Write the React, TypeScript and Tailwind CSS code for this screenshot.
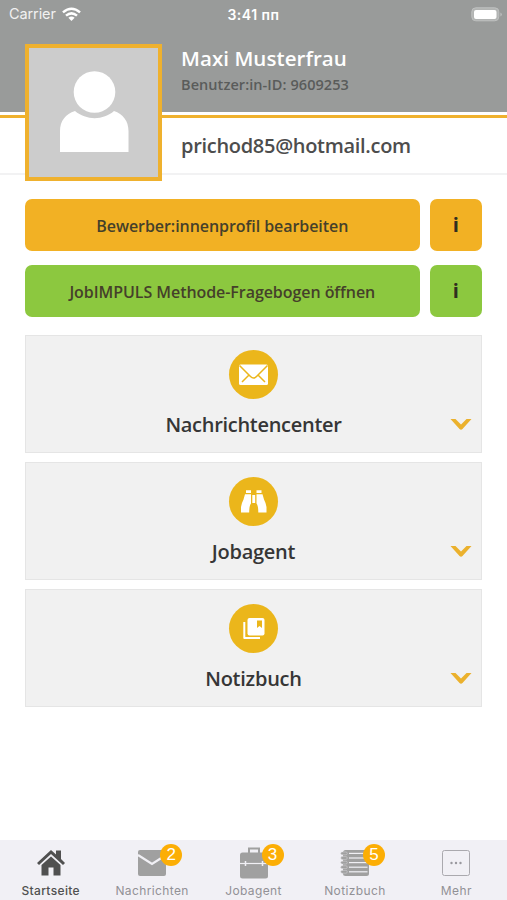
import React from "react";

function UserIcon() {
  return (
    <svg viewBox="0 0 128 128" className="h-32 w-32" fill="#fff">
      <circle cx="64.500" cy="44" r="20.800" />
      <path d="M30 104V83C30 73 35.500 66 45 63C56 72.500 73.500 72.500 84 63C93 66 98.500 73 98.500 83V104Z" />
    </svg>
  );
}

function EnvelopeIcon() {
  return (
    <svg viewBox="0 0 49 49" className="h-[49px] w-[49px]">
      <rect x="10" y="14.500" width="29" height="20.500" rx="1.500" fill="#fff" />
      <path d="M10.500 15.500L21.500 26.500Q24.500 29.500 27.500 26.500L38.500 15.500M13 32L19.500 25.500M36 32L29.500 25.500" fill="none" stroke="#ebb61b" strokeWidth="1.500" />
    </svg>
  );
}

function BinocularsIcon() {
  return (
    <svg viewBox="0 0 49 49" className="h-[49px] w-[49px]" fill="#fff">
      <path d="M17 13.200h5v2.800h-5zM27.500 13.200h5v2.800h-5z" />
      <path d="M16 17.200H22V26.500Q20.200 28.500 20.200 35.500H12V30Q12.600 26 14.500 22.500Z" />
      <path d="M33.500 17.200H27.500V26.500Q29.300 28.500 29.300 35.500H37.500V30Q36.900 26 35 22.500Z" />
      <path d="M23.300 18h2.900v8h-2.900z" />
    </svg>
  );
}

function BookIcon() {
  return (
    <svg viewBox="0 0 49 49" className="h-[49px] w-[49px]">
      <path d="M15.300 18V34H31" fill="none" stroke="#fff" strokeWidth="2" strokeLinejoin="round" />
      <rect x="18.500" y="14" width="17" height="17.500" rx="2" fill="#fff" />
      <path d="M28 16.500h5v7.500l-2.500-2-2.500 2z" fill="#ebb61b" />
    </svg>
  );
}

function Panel({ title, tracking, children }: { title: string; tracking: string; children: React.ReactNode }) {
  return (
    <section className="relative flex h-[118px] flex-col items-center border border-[#e5e5e5] bg-[#f1f1f1] pt-[14px]">
      <div className="h-[49px] w-[49px] rounded-full bg-[#ebb61b]">{children}</div>
      <h2 className={`mt-[12px] text-[20px] leading-[28px] font-semibold text-[#363636] ${tracking}`}>{title}</h2>
      <svg viewBox="0 0 22 14" className="absolute right-[9px] bottom-[21px] h-[14px] w-[22px]">
        <path d="M0.500 2H5.500L11 7.500L16.500 2H21.500L12.500 12Q11 13.500 9.500 12Z" fill="#ebb12d" />
      </svg>
    </section>
  );
}

function ActionRow({ label, color }: { label: string; color: string }) {
  return (
    <div className="flex h-[52.500px] gap-[10px]">
      <button className={`w-[395px] rounded-[7px] pt-[2px] text-[16px] font-semibold tracking-[-.06px] text-[#45402a] ${color}`}>{label}</button>
      <button className={`w-[52.500px] rounded-[7px] text-[20px] font-bold text-[#302e20] ${color}`}>i</button>
    </div>
  );
}

function HomeIcon() {
  return (
    <svg viewBox="0 0 30 30" className="h-[30px] w-[30px]" fill="#505050">
      <path d="M1 16L15 3L20 7.500V3.500H25V12L29 16L27 18L15 7L3 18Z" />
      <path d="M5.500 18L15 9.500L24.500 18V28.500H17.500V20.500H12.500V28.500H5.500Z" />
    </svg>
  );
}

function MailIcon() {
  return (
    <svg viewBox="0 0 30 30" className="h-[30px] w-[30px]">
      <rect x="1" y="3" width="28" height="26" rx="2" fill="#a0a0a0" />
      <path d="M1 8L15 17L29 8" fill="none" stroke="#f1f0f5" strokeWidth="2.200" />
    </svg>
  );
}

function BriefcaseIcon() {
  return (
    <svg viewBox="0 0 30 34" className="h-[34px] w-[30px]">
      <path d="M10 6V1.500H20V6" fill="none" stroke="#a0a0a0" strokeWidth="2" />
      <rect x="1" y="5.500" width="28" height="26" rx="2.500" fill="#a0a0a0" />
      <path d="M1 16.500H29" stroke="#f1f0f5" strokeWidth="1.200" />
      <path d="M6.500 14V19M23.500 14V19" stroke="#f1f0f5" strokeWidth="1.500" />
    </svg>
  );
}

function NotesIcon() {
  const lines = [5, 9.6, 14.2, 18.8, 23.4];
  return (
    <svg viewBox="0 0 30 30" className="h-[30px] w-[30px]">
      <rect x="3" y="3" width="26" height="26" rx="2.500" fill="#a0a0a0" />
      {lines.map((y) => (
        <g key={y}>
          <rect x=".8" y={y} width="6.500" height="2.800" rx="1.400" fill="#a0a0a0" stroke="#d6d5d9" strokeWidth=".5" />
          <path d={`M9 ${y + 1.4}H27.500`} stroke="#f1f0f5" strokeWidth="1.200" />
        </g>
      ))}
    </svg>
  );
}

function MoreIcon() {
  return (
    <svg viewBox="0 0 30 30" className="h-[30px] w-[30px]">
      <rect x="1.500" y="3.500" width="27" height="25" rx="2" fill="none" stroke="#aaa9ae" />
      <g fill="#99989e"><circle cx="10.500" cy="16" r="1.200" /><circle cx="15" cy="16" r="1.200" /><circle cx="19.500" cy="16" r="1.200" /></g>
    </svg>
  );
}

function Tab({ label, badge, active, children }: { label: string; badge?: number; active?: boolean; children: React.ReactNode }) {
  return (
    <div className="relative flex flex-1 flex-col items-center pt-[7px]">
      <div className="h-[36px]">{children}</div>
      <span className={`font-[Inter] text-[12px] leading-4 whitespace-nowrap ${active ? "font-medium tracking-[.350px] text-[#505050]" : "tracking-[.380px] text-[#929196]"}`}>{label}</span>
      {badge && <span className="absolute top-[4px] left-[calc(50%+8px)] flex h-[22px] w-[22px] items-center justify-center rounded-full bg-[#fcae05] font-['Liberation_Sans'] text-[17px] text-white">{badge}</span>}
    </div>
  );
}

export default function App() {
  return (
    <div className="flex h-[900px] w-[507px] flex-col overflow-hidden bg-white font-['Open_Sans',sans-serif]">
      <header className="relative h-[175px] shrink-0 border-b-2 border-[#f2f2f3]">
        <div className="h-[112px] bg-[#999b9a]">
          <div className="grid h-[28px] grid-cols-3 items-center px-[9px] font-[Inter] text-[14.500px] text-white">
            <div className="flex items-center gap-[6px] text-[#f1f1f1]">
              <span className="tracking-[-.1px]">Carrier</span>
              <svg viewBox="0 0 20 15" className="h-[15px] w-[19px]" fill="none" stroke="#fff" strokeWidth="2.600">
                <path d="M1 5.200Q10-2.500 19 5.200M4.200 8.700Q10 3.900 15.800 8.700" />
                <path d="M6.700 11Q10 8.300 13.300 11L10 14.300Z" fill="#fff" stroke="none" />
              </svg>
            </div>
            <span className="text-center text-[14px] font-semibold tracking-[.5px]">3:41 пп</span>
            <svg viewBox="0 0 32 15" className="mr-[-5px] h-[15px] w-[32px] justify-self-end">
              <rect x=".8" y=".8" width="27" height="13" rx="4" fill="#b2b4b3" stroke="#bfc1c0" />
              <rect x="3" y="3" width="22.500" height="9" rx="2" fill="#fff" />
              <path d="M29.500 5.500Q32 7.500 29.500 9.500Z" fill="#c5c7c6" />
            </svg>
          </div>
          <div className="pl-[181px]">
            <h1 className="mt-[16px] text-[20.500px] leading-[28px] font-semibold tracking-[.06px] text-white">Maxi Musterfrau</h1>
            <p className="mt-[3px] text-[14.500px] leading-[20px] font-semibold tracking-[.07px] text-[#5a5c5b]">Benutzer:in-ID: 9609253</p>
          </div>
        </div>
        <div className="mt-[3px] h-[3px] bg-[#efb12e]" />
        <p className="mt-[14px] pl-[181px] text-[20px] leading-[28px] font-semibold tracking-[-.3px] text-[#4d4d4d]">prichod85@hotmail.com</p>
        <div className="absolute top-[43.500px] left-[25px] flex h-[137px] w-[137px] items-center justify-center border-4 border-[#efb12e] bg-[#cccccc]">
          <UserIcon />
        </div>
      </header>
      <main className="flex flex-1 flex-col px-[25px] pt-[23.500px]">
        <div className="flex flex-col gap-[13.500px]">
          <ActionRow label="Bewerber:innenprofil bearbeiten" color="bg-[#f2b124]" />
          <ActionRow label="JobIMPULS Methode-Fragebogen öffnen" color="bg-[#8cc83f]" />
        </div>
        <div className="mt-[18px] flex flex-col gap-[9px]">
          <Panel title="Nachrichtencenter" tracking="tracking-[-.29px]"><EnvelopeIcon /></Panel>
          <Panel title="Jobagent" tracking="tracking-[-.25px]"><BinocularsIcon /></Panel>
          <Panel title="Notizbuch" tracking="tracking-[-.25px]"><BookIcon /></Panel>
        </div>
      </main>
      <nav className="flex h-[60px] shrink-0 bg-[#f1f0f5]">
        <Tab label="Startseite" active><HomeIcon /></Tab>
        <Tab label="Nachrichten" badge={2}><MailIcon /></Tab>
        <Tab label="Jobagent" badge={3}><BriefcaseIcon /></Tab>
        <Tab label="Notizbuch" badge={5}><NotesIcon /></Tab>
        <Tab label="Mehr"><MoreIcon /></Tab>
      </nav>
    </div>
  );
}
